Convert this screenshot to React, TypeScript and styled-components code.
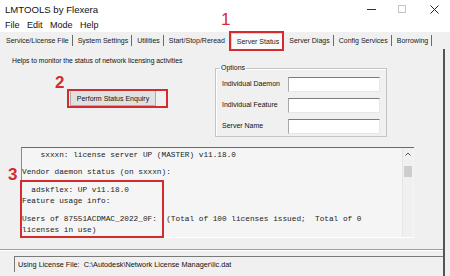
import React from "react";
import styled, { createGlobalStyle } from "styled-components";

const Global = createGlobalStyle`
  html, body { margin: 0; padding: 0; background: #f0f0f0; }
  * { box-sizing: border-box; }
`;

const RED = "#d42b2f";
const UI = `"Liberation Sans", Arial, sans-serif`;

const Window = styled.div`
  position: relative;
  width: 450px;
  height: 276px;
  overflow: hidden;
  background: #f0f0f0;
  display: flex;
  flex-direction: column;
  font-family: ${UI};
  color: #111;
`;

const TitleBar = styled.div`
  height: 18px;
  background: #fff;
  display: flex;
  align-items: center;
  padding-left: 5px;
  font-size: 9.6px;
`;

const TitleText = styled.div`
  flex: 1;
`;

const Controls = styled.div`
  display: flex;
  align-items: center;
  height: 18px;
`;

const CtrlBtn = styled.div<{ $w: number }>`
  width: ${(p) => p.$w}px;
  height: 18px;
  display: flex;
  align-items: center;
  justify-content: center;
`;

const MenuBar = styled.div`
  height: 14px;
  background: #fff;
  display: flex;
  align-items: center;
  gap: 7.5px;
  padding-left: 5px;
  font-size: 9px;
`;

const TabStrip = styled.div`
  height: 17px;
  display: flex;
  align-items: center;
  padding-left: 1px;
  font-size: 7px;
  color: #1a1a1a;
`;

const Tab = styled.div<{ $sep?: boolean; $active?: boolean }>`
  padding: 0 3px 0 5px;
  line-height: 11px;
  border-right: 1px solid ${(p) => (p.$sep ? "#6a6a6a" : "transparent")};
  ${(p) =>
    p.$active &&
    `
    background: #fafafa;
    line-height: 15px;
    padding: 0 4px 0 5px;
    margin: 0 0 0 2px;
    border: 1px solid #d8d8d8;
    border-bottom: none;
  `}
`;

const Page = styled.div`
  flex: 1;
  margin-right: 5px;
  border-right: 2px solid #555;
  display: flex;
  flex-direction: column;
  font-size: 7px;
  color: #111;
`;

const Description = styled.div`
  margin-top: 7px;
  padding-left: 12px;
  line-height: 10px;
  font-size: 6.8px;
`;

const TopRow = styled.div`
  display: flex;
  margin-top: -3px;
`;

const ButtonArea = styled.div`
  width: 215px;
  padding: 27px 0 0 70px;
`;

const Button = styled.div`
  width: 86px;
  height: 16px;
  background: #e1e1e1;
  border: 1px solid #adadad;
  display: flex;
  align-items: center;
  justify-content: center;
  font-size: 7px;
`;

const Options = styled.fieldset`
  width: 172px;
  height: 74px;
  margin: 0;
  padding: 0 6px;
  border: 1px solid #c4c4c4;
  box-shadow: inset 1px 1px 0 #fff;
  display: flex;
  flex-direction: column;
  gap: 5px;
`;

const Legend = styled.legend`
  padding: 0 1px;
  margin-left: -2px;
  line-height: 10px;
  font-size: 7px;
  color: #111;
`;

const OptRow = styled.div`
  display: flex;
  align-items: center;
  height: 16px;
  &:first-of-type {
    margin-top: 3px;
  }
`;

const OptLabel = styled.div`
  width: 66px;
  padding-bottom: 2px;
  color: #111;
  font-size: 7px;
`;

const OptInput = styled.div`
  width: 92px;
  height: 15px;
  background: #fff;
  border-top: 1px solid #7a7a7a;
  border-left: 1px solid #a8a8a8;
  border-right: 1px solid #e8e8e8;
  border-bottom: 1px solid #e8e8e8;
`;

const Output = styled.div`
  margin: 10px 0 0 21px;
  width: 393px;
  height: 91px;
  background: #f5f5f5;
  border-top: 1px solid #6a6a6a;
  border-left: 1px solid #8a8a8a;
  border-bottom: 1px solid #fff;
  display: flex;
`;

const OutputText = styled.div`
  flex: 1;
  padding: 2px 0 0 0;
  font-family: "Liberation Mono", "Courier New", monospace;
  font-size: 7.75px;
  color: #222;
  white-space: pre;
`;

const Line = styled.div<{ $blank?: number }>`
  height: ${(p) => (p.$blank ? p.$blank : 11)}px;
  line-height: 11px;
`;

const ScrollBar = styled.div`
  width: 11px;
  display: flex;
  flex-direction: column;
  align-items: center;
  background: #f0f0f0;
  border-left: 1px solid #e6e6e6;
  margin-right: 1px;
`;

const ArrowBox = styled.div`
  height: 12px;
  display: flex;
  align-items: center;
  justify-content: center;
`;

const Thumb = styled.div`
  margin-top: 6px;
  width: 8px;
  height: 11px;
  background: #cdcdcd;
`;

const StatusBar = styled.div`
  margin-top: 11px;
  border-top: 1px solid #a0a0a0;
  box-shadow: 0 1px 0 #fff inset;
  padding: 6px 0 0 14px;
  flex: 1;
`;

const StatusField = styled.div`
  height: 16px;
  border-top: 1px solid #7a7a7a;
  border-left: 1px solid #7a7a7a;
  padding-left: 3px;
  display: flex;
  align-items: center;
  font-size: 7.3px;
`;

const RedBox = styled.div`
  position: absolute;
  border: 2px solid ${RED};
`;

const Num = styled.div`
  position: absolute;
  color: ${RED};
  font-family: ${UI};
  font-weight: bold;
  line-height: 1;
`;

const lines: { t: string; blank?: number }[] = [
  { t: "    sxxxn: license server UP (MASTER) v11.18.0" },
  { t: "", blank: 6 },
  { t: "Vendor daemon status (on sxxxn):" },
  { t: "", blank: 7 },
  { t: "  adskflex: UP v11.18.0" },
  { t: "Feature usage info:" },
  { t: "", blank: 7 },
  { t: "Users of 87551ACDMAC_2022_0F:  (Total of 100 licenses issued;  Total of 0" },
  { t: "licenses in use)" },
];

export default function App() {
  return (
    <>
      <Global />
      <Window>
        <TitleBar>
          <TitleText>LMTOOLS by Flexera</TitleText>
          <Controls>
            <CtrlBtn $w={30}>
              <svg width="9" height="9" viewBox="0 0 9 9">
                <line x1="0" y1="4.5" x2="9" y2="4.5" stroke="#333" strokeWidth="1" />
              </svg>
            </CtrlBtn>
            <CtrlBtn $w={32}>
              <svg width="8" height="8" viewBox="0 0 8 8">
                <rect x="0.5" y="0.5" width="7" height="7" fill="none" stroke="#c4c4c4" strokeWidth="1" />
              </svg>
            </CtrlBtn>
            <CtrlBtn $w={32}>
              <svg width="9" height="9" viewBox="0 0 9 9">
                <path d="M0.5 0.5 L8.5 8.5 M8.5 0.5 L0.5 8.5" stroke="#222" strokeWidth="1" />
              </svg>
            </CtrlBtn>
          </Controls>
        </TitleBar>
        <MenuBar>
          <span>File</span>
          <span>Edit</span>
          <span>Mode</span>
          <span>Help</span>
        </MenuBar>
        <TabStrip>
          <Tab $sep>Service/License File</Tab>
          <Tab $sep>System Settings</Tab>
          <Tab $sep>Utilities</Tab>
          <Tab>Start/Stop/Reread</Tab>
          <Tab $active>Server Status</Tab>
          <Tab $sep>Server Diags</Tab>
          <Tab $sep>Config Services</Tab>
          <Tab $sep>Borrowing</Tab>
        </TabStrip>
        <Page>
          <Description>Helps to monitor the status of network licensing activities</Description>
          <TopRow>
            <ButtonArea>
              <Button>Perform Status Enquiry</Button>
            </ButtonArea>
            <Options>
              <Legend>Options</Legend>
              <OptRow>
                <OptLabel>Individual Daemon</OptLabel>
                <OptInput />
              </OptRow>
              <OptRow>
                <OptLabel>Individual Feature</OptLabel>
                <OptInput />
              </OptRow>
              <OptRow>
                <OptLabel>Server Name</OptLabel>
                <OptInput />
              </OptRow>
            </Options>
          </TopRow>
          <Output>
            <OutputText>
              {lines.map((l, i) => (
                <Line key={i} $blank={l.blank}>
                  {l.t}
                </Line>
              ))}
            </OutputText>
            <ScrollBar>
              <ArrowBox>
                <svg width="6" height="4" viewBox="0 0 6 4">
                  <path d="M0.5 3.5 L3 1 L5.5 3.5" fill="none" stroke="#555" strokeWidth="1" />
                </svg>
              </ArrowBox>
              <Thumb />
            </ScrollBar>
          </Output>
          <StatusBar>
            <StatusField>Using License File:&nbsp; C:\Autodesk\Network License Manager\lic.dat</StatusField>
          </StatusBar>
        </Page>

        <RedBox style={{ left: 229, top: 31, width: 55, height: 20 }} />
        <RedBox style={{ left: 67, top: 89, width: 101, height: 19 }} />
        <RedBox style={{ left: 20, top: 180, width: 144, height: 58 }} />
        <Num style={{ left: 221, top: 11, fontSize: 17, fontWeight: 400 }}>1</Num>
        <Num style={{ left: 55, top: 74, fontSize: 17 }}>2</Num>
        <Num style={{ left: 8, top: 166, fontSize: 17 }}>3</Num>
      </Window>
    </>
  );
}
